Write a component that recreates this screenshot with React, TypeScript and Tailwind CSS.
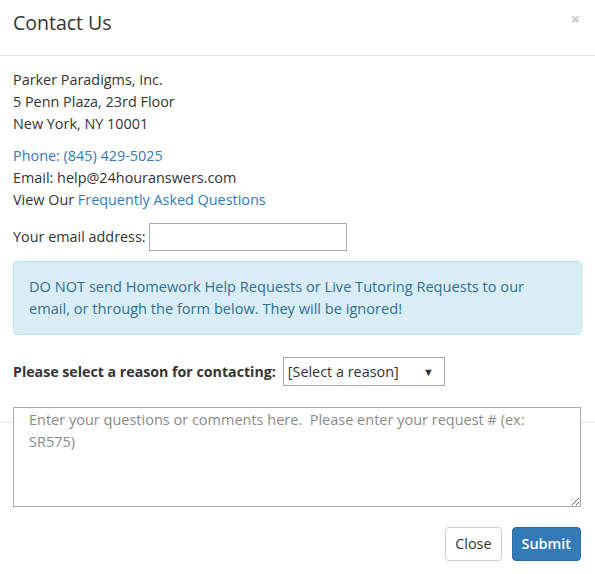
import React from "react";

export default function App() {
  return (
    <div
      className="w-[595px] h-[574px] bg-white text-[#333] text-[14.4px] leading-[22px] overflow-hidden"
      style={{ fontFamily: '"Open Sans", "Noto Sans", sans-serif' }}
    >
      {/* header */}
      <div className="h-[56px] border-b border-[#e5e5e5] flex items-start justify-between pl-[13px] pr-[15px] pt-[9px]">
        <h4 className="text-[19.5px] leading-[28px] text-[#333]">Contact Us</h4>
        <button className="text-[#c8c8c8] text-[16px] font-bold leading-none mt-[2px]">×</button>
      </div>

      {/* body */}
      <div className="px-[13px] pt-[13px]">
        <p>
          Parker Paradigms, Inc.
          <br />5 Penn Plaza, 23rd Floor
          <br />New York, NY 10001
        </p>
        <p className="mt-[10px]">
          <a className="text-[#337ab7]">Phone: (845) 429-5025</a>
          <br />Email: help@24houranswers.com
          <br />View Our <a className="text-[#337ab7]">Frequently Asked Questions</a>
        </p>
        <div className="mt-[12px] flex items-center gap-[3px]">
          <span>Your email address:</span>
          <input className="w-[198px] h-[28px] border border-[#a9a9a9] px-1 outline-none" />
        </div>
        <div className="mt-[10px] bg-[#d9edf7] border border-[#bce8f1] rounded-[4px] pl-[15px] pr-[40px] pt-[13px] pb-[15px] text-[14.6px] text-[#31708f]">
          DO NOT send Homework Help Requests or Live Tutoring Requests to our email, or through the form below. They will be ignored!
        </div>
        <div className="mt-[22px] flex items-center gap-[7px]">
          <span className="font-bold text-[14.2px]">Please select a reason for contacting:</span>
          <div className="w-[162px] h-[29px] border border-[#a9a9a9] flex items-center justify-between pl-[4px] pr-[10px]">
            <span>[Select a reason]</span>
            <span className="text-[11px]">▼</span>
          </div>
        </div>
        <textarea
          className="relative z-10 block mt-[21px] -mb-[85px] w-[568px] h-[100px] border border-[#a9a9a9] bg-white px-[15px] py-[1px] text-[14.5px] leading-[22px] placeholder:text-[#8a8a8a] outline-none"
          placeholder="Enter your questions or comments here.  Please enter your request # (ex: SR575)"
        />
      </div>

      {/* footer */}
      <div className="border-t border-[#e5e5e5] pt-[104px] pr-[14px] flex justify-end gap-[10px]">
        <button className="h-[34px] px-[9px] border border-[#ccc] rounded-[4px] bg-white text-[#333]">Close</button>
        <button className="h-[34px] px-[9px] border border-[#2e6da4] rounded-[4px] bg-[#337ab7] text-white font-semibold">Submit</button>
      </div>
    </div>
  );
}
